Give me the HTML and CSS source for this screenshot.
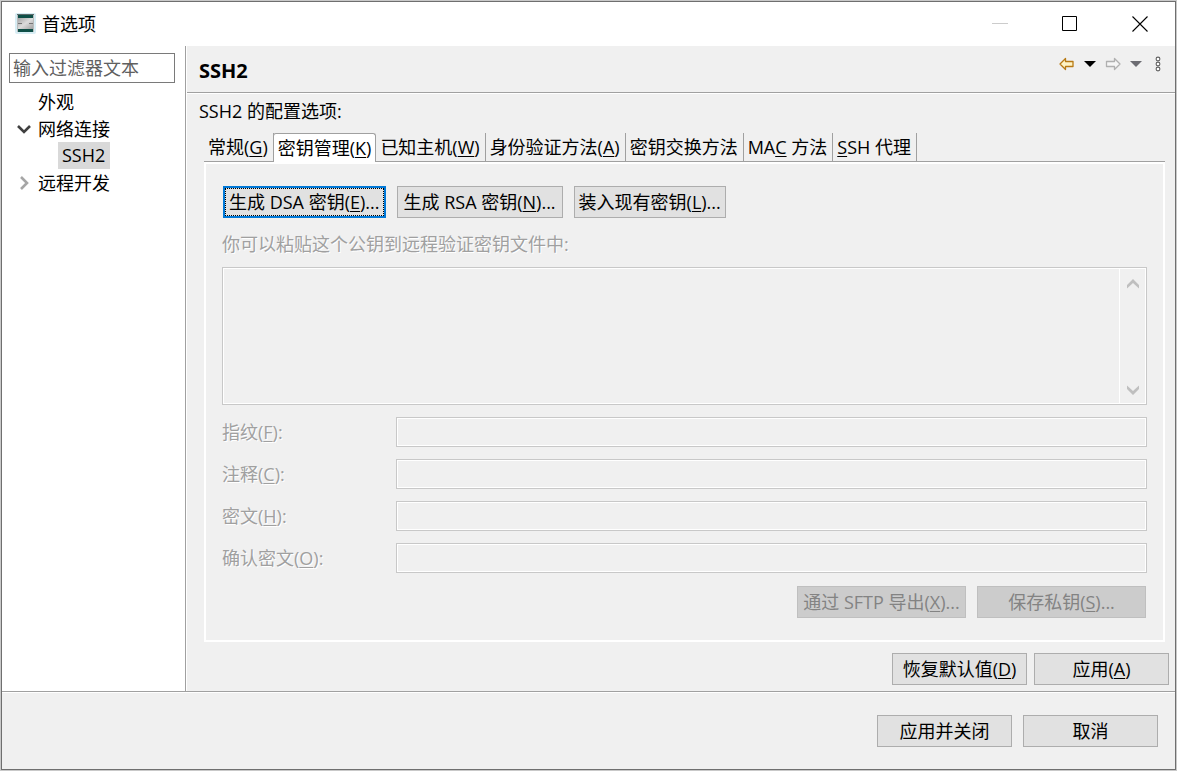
FILE: index.html
```html
<!DOCTYPE html>
<html lang="zh-CN">
<head>
<meta charset="utf-8">
<title>首选项</title>
<link rel="stylesheet" href="styles.css">
</head>
<body>
<div class="window">
  <header class="titlebar">
    <svg class="app-icon" width="22" height="22" viewBox="0 0 22 22">
      <defs><linearGradient id="steel" x1="0" y1="0" x2="1" y2="1"><stop offset="0" stop-color="#a4a4a4"/><stop offset=".5" stop-color="#dcdcdc"/><stop offset="1" stop-color="#a0a0a0"/></linearGradient></defs>
      <rect width="21" height="21" rx="2" fill="#d8edf4"/>
      <path d="M2 2h17v17H2z" fill="#b9bcbc"/>
      <path d="M3 2h15v3H3zM3 16h15v3H3z" fill="#0f4f47"/>
      <path d="M2 1h17v1H2z" fill="#5c6b6b"/>
      <path d="M3 5h15v11H3z" fill="url(#steel)"/>
      <path d="M3 10.500h4M14 10.500h4" stroke="#777"/>
    </svg>
    <h1 class="title">首选项</h1>
    <div class="caption-buttons">
      <button class="caption" aria-label="最小化" disabled><svg width="16" height="16"><path d="M0 7.500h16" stroke="#ccc"/></svg></button>
      <button class="caption" aria-label="最大化"><svg width="16" height="16"><path d="M.5.500h14v14H.5z" fill="none" stroke="#000"/></svg></button>
      <button class="caption" aria-label="关闭"><svg width="16" height="16"><path d="M.5.500l15 15M15.500.500l-15 15" stroke="#000" stroke-width="1.100"/></svg></button>
    </div>
  </header>

  <div class="content">
    <nav class="sidebar">
      <input class="filter" type="text" placeholder="输入过滤器文本" aria-label="输入过滤器文本">
      <ul class="tree">
        <li class="node"><span class="twisty"></span><span class="node-label">外观</span></li>
        <li class="node"><svg class="twisty" viewBox="0 0 16 16"><path d="M2 5l6 6 6-6" fill="none" stroke="#404040" stroke-width="2.600"/></svg><span class="node-label">网络连接</span></li>
        <li class="node child"><span class="node-label selected">SSH2</span></li>
        <li class="node"><svg class="twisty" viewBox="0 0 16 16"><path d="M5 2l6 6-6 6" fill="none" stroke="#a6a6a6" stroke-width="2.600"/></svg><span class="node-label">远程开发</span></li>
      </ul>
    </nav>

    <main class="page">
      <div class="page-head">
        <h2 class="page-title">SSH2</h2>
        <div class="toolbar">
          <button class="tool" aria-label="后退"><svg width="16" height="14" viewBox="0 0 16 14"><path d="M1 7l5.500-5.500V4.500h7.500v5H6.500v3z" fill="#fff3c4" stroke="#b87a14" stroke-width="1.300" stroke-linejoin="round"/></svg></button>
          <button class="tool" aria-label="后退历史"><svg width="12" height="14"><path d="M0 4h12L6 10z" fill="#000"/></svg></button>
          <button class="tool" aria-label="前进"><svg width="16" height="14" viewBox="0 0 16 14"><path d="M15 7L9.500 1.500V4.500H1.500v5h8v3z" fill="#f6f6f6" stroke="#b0b0b0" stroke-width="1.300" stroke-linejoin="round"/></svg></button>
          <button class="tool" aria-label="前进历史"><svg width="12" height="14"><path d="M0 4h12L6 10z" fill="#6c6c72"/></svg></button>
          <button class="tool menu" aria-label="菜单"><svg width="6" height="16"><g fill="#fff" stroke="#606060" stroke-width="1.100"><circle cx="3" cy="3" r="1.900"/><circle cx="3" cy="8" r="1.900"/><circle cx="3" cy="13" r="1.900"/></g></svg></button>
        </div>
      </div>

      <div class="page-body">
        <p class="intro">SSH2 的配置选项:</p>
        <div class="tabs" role="tablist">
          <button class="tab" role="tab">常规(<u>G</u>)</button>
          <button class="tab active" role="tab" aria-selected="true">密钥管理(<u>K</u>)</button>
          <button class="tab" role="tab">已知主机(<u>W</u>)</button>
          <button class="tab" role="tab">身份验证方法(<u>A</u>)</button>
          <button class="tab" role="tab">密钥交换方法</button>
          <button class="tab" role="tab">MA<u>C</u> 方法</button>
          <button class="tab" role="tab"><u>S</u>SH 代理</button>
        </div>
        <section class="panel" role="tabpanel">
          <div class="key-actions">
            <button class="btn focused">生成 DSA 密钥(<u>E</u>)...</button>
            <button class="btn generate">生成 RSA 密钥(<u>N</u>)...</button>
            <button class="btn">装入现有密钥(<u>L</u>)...</button>
          </div>
          <label class="muted" for="public-key">你可以粘贴这个公钥到远程验证密钥文件中:</label>
          <div class="key-box">
            <textarea class="key-text" id="public-key" disabled></textarea>
            <div class="scrollbar">
              <svg width="12" height="10" viewBox="0 0 12 10"><path d="M0 6l6-6 6 6v3.500L6 4 0 9.500z" fill="#bfbfbf"/></svg>
              <svg width="12" height="10" viewBox="0 0 12 10"><path d="M0 4l6 6 6-6V.5L6 6 0 .5z" fill="#bfbfbf"/></svg>
            </div>
          </div>
          <div class="fields">
            <label class="muted" for="finger">指纹(<u>F</u>):</label><input class="field" id="finger" type="text" disabled>
            <label class="muted" for="comment">注释(<u>C</u>):</label><input class="field" id="comment" type="text" disabled>
            <label class="muted" for="pass">密文(<u>H</u>):</label><input class="field" id="pass" type="password" disabled>
            <label class="muted" for="confirm">确认密文(<u>O</u>):</label><input class="field" id="confirm" type="password" disabled>
          </div>
          <div class="save-actions">
            <button class="btn wide" disabled>通过 SFTP 导出(<u>X</u>)...</button>
            <button class="btn wide" disabled>保存私钥(<u>S</u>)...</button>
          </div>
        </section>
        <div class="page-actions">
          <button class="btn mid">恢复默认值(<u>D</u>)</button>
          <button class="btn mid">应用(<u>A</u>)</button>
        </div>
      </div>
    </main>
  </div>

  <footer class="footer">
    <button class="btn mid">应用并关闭</button>
    <button class="btn mid">取消</button>
  </footer>
</div>
</body>
</html>
```
FILE: styles.css
```css
* { box-sizing: border-box; }

body {
  margin: 0;
  min-height: 100vh;
  padding: 1px;
  display: flex;
  background: #c9c9c9;
  color: #000;
  font: 18px/24px "Open Sans", "Noto Sans CJK SC", sans-serif;
}

button, input, textarea { font: inherit; color: inherit; }
button { padding: 0; border: 0; background: none; white-space: nowrap; }
svg { display: block; }
u { text-decoration-thickness: 1px; text-underline-offset: 2px; }

.window {
  flex: 1;
  min-width: 0;
  display: flex;
  flex-direction: column;
  border: 1px solid #6f6f6f;
  background: #f0f0f0;
}

.titlebar {
  display: flex;
  align-items: center;
  height: 44px;
  padding-left: 13px;
  background: #fff;
}
.title { margin: 0 0 0 5px; font-size: 18px; font-weight: 400; }
.caption-buttons { display: flex; margin-left: auto; }
.caption { width: 70px; display: flex; justify-content: center; }

.content { flex: 1; display: flex; }

.sidebar {
  flex: 0 0 184px;
  padding: 7px 10px 0 7px;
  border-right: 1px solid #a0a0a0;
  background: #fff;
}
.filter {
  display: block;
  width: 100%;
  height: 30px;
  padding: 0 3px;
  border: 1px solid #7a7a7a;
  border-radius: 0;
  background: #fff;
}
.filter::placeholder { color: #606060; opacity: 1; }
.tree { list-style: none; margin: 5px 0 0; padding: 0; }
.node { display: flex; align-items: center; height: 27px; padding-left: 7px; }
.child { padding-left: 49px; }
.twisty { width: 16px; height: 16px; margin-right: 6px; }
.selected { padding: 1px 5px 2px 4px; background: #d9d9d9; }

.page {
  flex: 1;
  min-width: 0;
  display: flex;
  flex-direction: column;
  border-left: 1px solid #fff;
}
.page-head {
  display: flex;
  justify-content: space-between;
  height: 47px;
  padding: 10px 14px 0 12px;
  border-bottom: 1px solid #a0a0a0;
  box-shadow: 0 1px #fff;
}
.page-title { margin: 3px 0 0; font-size: 20px; line-height: 24px; }
.toolbar { display: flex; align-items: center; height: 16px; gap: 9px; }
.menu { margin-left: 4px; }

.page-body {
  flex: 1;
  display: flex;
  flex-direction: column;
  padding: 6px 6px 6px 12px;
}
.intro { margin: 0; }

.tabs {
  display: flex;
  margin: 10px 4px 0 5px;
  border-bottom: 1px solid #a0a0a0;
}
.tab {
  height: 28px;
  padding: 0 5px 0 4px;
  border-right: 1px solid #a0a0a0;
}
.active {
  height: 29px;
  margin: 0 0 -1px -1px;
  padding: 0 4px 1px;
  border: 1px solid #a0a0a0;
  border-bottom: 0;
  border-radius: 3px 3px 0 0;
  background: #fff;
}

.panel {
  flex: 1;
  display: flex;
  flex-direction: column;
  margin: 0 4px 0 5px;
  padding: 22px 16px;
  border: 2px solid #fff;
}
.key-actions { display: flex; gap: 11px; margin-bottom: 14px; padding-left: 1px; }

.btn {
  height: 32px;
  padding: 0 4px;
  border: 1px solid #adadad;
  background: #e1e1e1;
}
.btn:disabled { border-color: #bfbfbf; background: #ccc; color: #838383; }
.focused {
  padding: 0 4px;
  border: 2px solid #0078d7;
  outline: 1px dotted #000;
  outline-offset: -3px;
}
.generate { padding: 0 6px; }
.wide { min-width: 169px; }
.mid { min-width: 135px; }

.muted { color: #a0a0a0; text-shadow: 1px 1px #fff; }

.key-box {
  flex: 1;
  min-height: 100px;
  display: flex;
  margin: 11px 0 12px;
  border: 1px solid #c8c8c8;
  box-shadow: inset 0 0 0 1px #fff;
}
.key-text {
  flex: 1;
  min-width: 0;
  margin: 1px 0 1px 1px;
  border: 0;
  background: #f0f0f0;
  resize: none;
}
.scrollbar {
  width: 27px;
  display: flex;
  flex-direction: column;
  justify-content: space-between;
  align-items: center;
  padding: 11px 1px 9px 0;
  border-left: 1px solid #fff;
}

.fields {
  display: grid;
  grid-template-columns: 174px 1fr;
  row-gap: 12px;
  align-items: center;
}
.field {
  width: 100%;
  height: 30px;
  border: 1px solid #c8c8c8;
  border-radius: 0;
  background: #f0f0f0;
  box-shadow: inset 0 0 0 1px #fff;
}
.save-actions { display: flex; justify-content: flex-end; gap: 11px; margin-top: 13px; padding-right: 1px; }
.page-actions { display: flex; justify-content: flex-end; gap: 7px; margin-top: 11px; }

.footer {
  display: flex;
  justify-content: flex-end;
  gap: 11px;
  padding: 23px 17px 22px;
  border-top: 1px solid #a0a0a0;
  box-shadow: inset 0 1px #fff;
}
```
